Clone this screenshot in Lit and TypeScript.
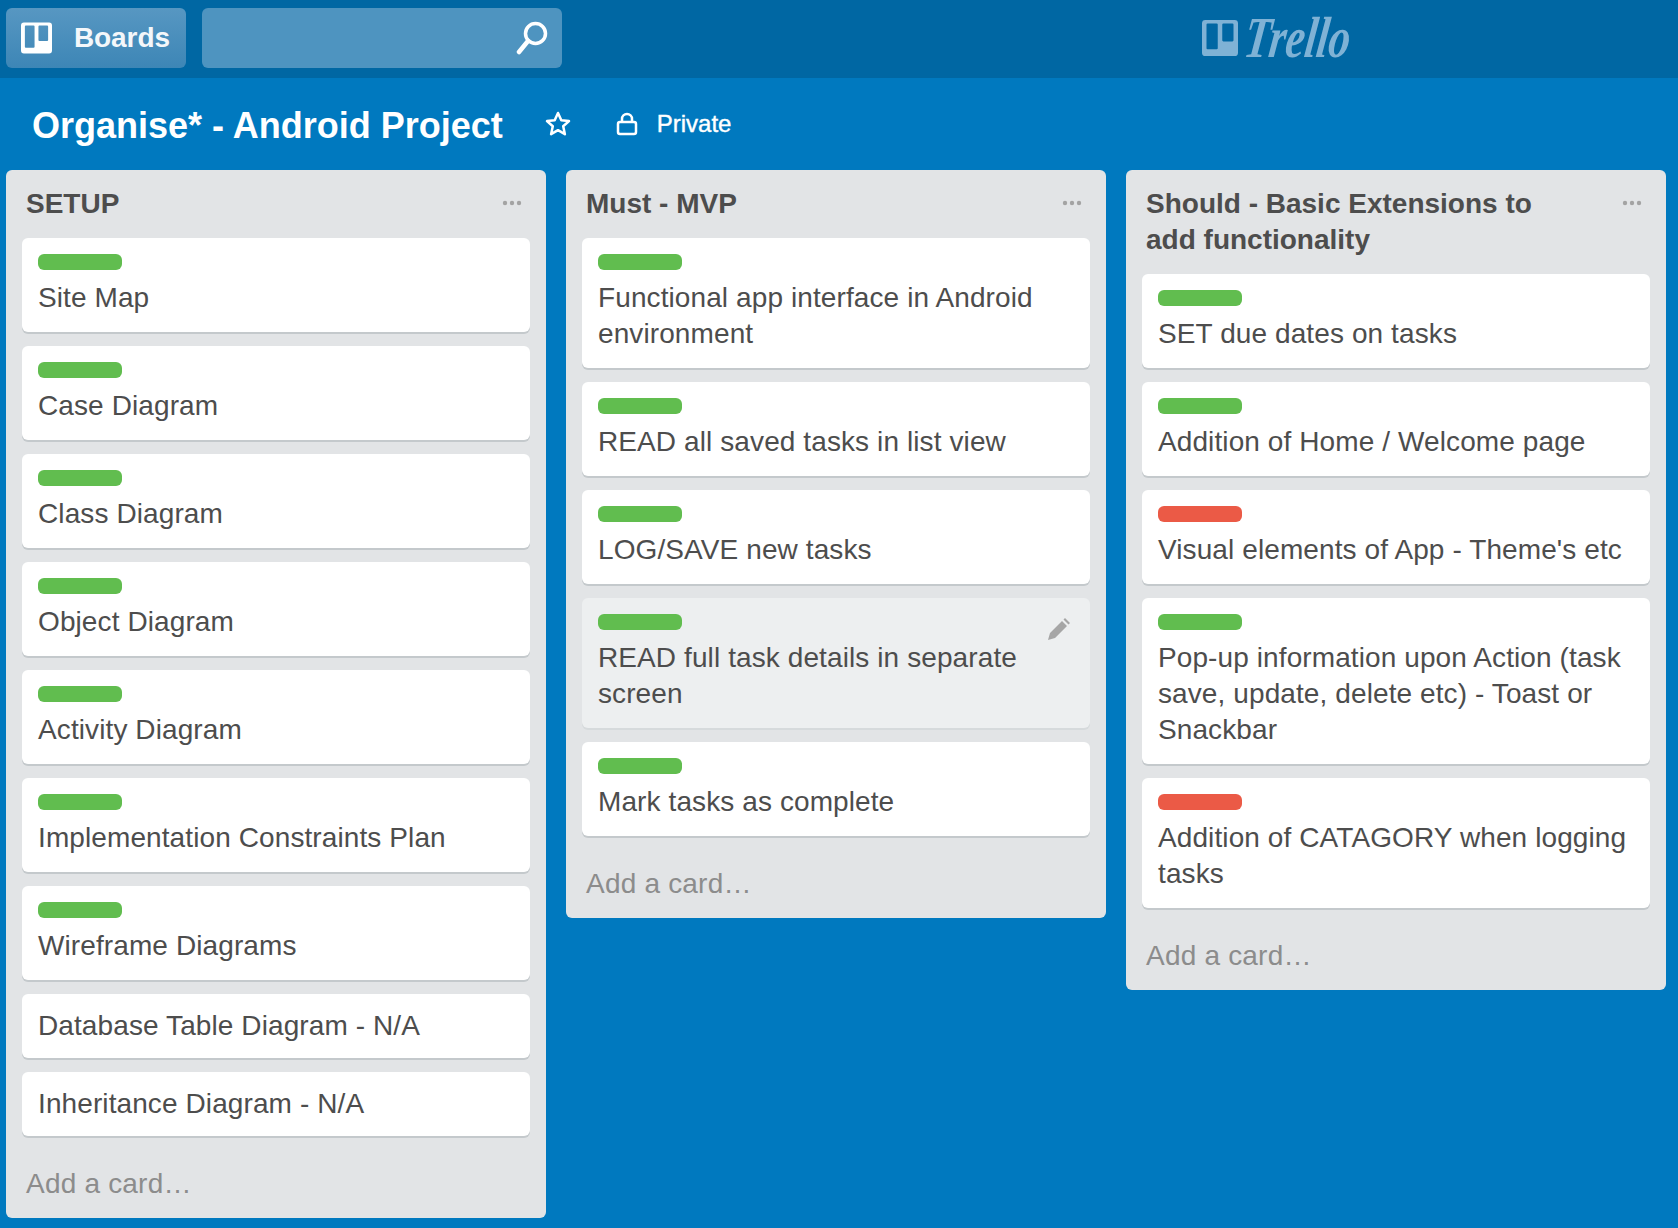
// Tablero estilo Trello: cabecera, barra del tablero y tres listas de tarjetas.
import { LitElement, html, css, svg } from "lit";
import { customElement } from "lit/decorators.js";
import { classMap } from "lit/directives/class-map.js";

type Label = "green" | "red";
interface Card {
  text: string;
  label?: Label;
  hover?: boolean;
}
interface List {
  title: string;
  cards: Card[];
}

const LISTS: List[] = [
  {
    title: "SETUP",
    cards: [
      { text: "Site Map", label: "green" },
      { text: "Case Diagram", label: "green" },
      { text: "Class Diagram", label: "green" },
      { text: "Object Diagram", label: "green" },
      { text: "Activity Diagram", label: "green" },
      { text: "Implementation Constraints Plan", label: "green" },
      { text: "Wireframe Diagrams", label: "green" },
      { text: "Database Table Diagram - N/A" },
      { text: "Inheritance Diagram - N/A" },
    ],
  },
  {
    title: "Must - MVP",
    cards: [
      { text: "Functional app interface in Android environment", label: "green" },
      { text: "READ all saved tasks in list view", label: "green" },
      { text: "LOG/SAVE new tasks", label: "green" },
      { text: "READ full task details in separate screen", label: "green", hover: true },
      { text: "Mark tasks as complete", label: "green" },
    ],
  },
  {
    title: "Should - Basic Extensions to add functionality",
    cards: [
      { text: "SET due dates on tasks", label: "green" },
      { text: "Addition of Home / Welcome page", label: "green" },
      { text: "Visual elements of App - Theme's etc", label: "red" },
      { text: "Pop-up information upon Action (task save, update, delete etc) - Toast or Snackbar", label: "green" },
      { text: "Addition of CATAGORY when logging tasks", label: "red" },
    ],
  },
];

const boardIcon = svg`<path fill-rule="evenodd" d="M3 0h26a3 3 0 0 1 3 3v26a3 3 0 0 1-3 3H3a3 3 0 0 1-3-3V3a3 3 0 0 1 3-3zm1 4v21a1 1 0 0 0 1 1h8a1 1 0 0 0 1-1V4a1 1 0 0 0-1-1H5a1 1 0 0 0-1 1zm14 0v14a1 1 0 0 0 1 1h8a1 1 0 0 0 1-1V4a1 1 0 0 0-1-1h-8a1 1 0 0 0-1 1z"/>`;

@customElement("app-root")
export class AppRoot extends LitElement {
  static styles = css`
    :host {
      display: block;
      height: 1228px;
      overflow: hidden;
      background: #0079bf;
      font-family: "Liberation Sans", Arial, sans-serif;
      color: #4d4d4d;
    }

    /* Cabecera */
    .top {
      height: 78px;
      box-sizing: border-box;
      padding: 8px 6px 10px;
      background: #0067a3;
      display: flex;
      gap: 16px;
      position: relative;
    }
    .boards {
      width: 180px;
      display: flex;
      align-items: center;
      gap: 22px;
      padding-left: 15px;
      box-sizing: border-box;
      border-radius: 6px;
      background: linear-gradient(#5797c2, #3d86b6);
      color: #f4f7fa;
      font-size: 28px;
      font-weight: 700;
      letter-spacing: -0.1px;
    }
    .boards svg {
      width: 31px;
      height: 32px;
      fill: #fff;
    }
    .search {
      width: 360px;
      display: flex;
      align-items: center;
      justify-content: flex-end;
      padding-right: 14px;
      box-sizing: border-box;
      border-radius: 6px;
      background: #4e94c0;
    }
    .search svg {
      width: 32px;
      height: 34px;
    }
    .logo {
      position: absolute;
      left: 1202px;
      top: 20px;
      display: flex;
      align-items: center;
      gap: 7px;
      color: #7fb2d5;
    }
    .logo svg {
      width: 36px;
      height: 36px;
      fill: #7fb2d5;
    }
    .logo span {
      width: 104px;
      font-family: "Liberation Serif", serif;
      font-style: italic;
      font-weight: 700;
      font-size: 58px;
      line-height: 36px;
      transform: scaleX(0.74) skewX(-10deg);
      transform-origin: left center;
    }

    /* Barra del tablero */
    .bar {
      height: 92px;
      box-sizing: border-box;
      padding: 0 32px;
      display: flex;
      align-items: center;
      color: #fff;
    }
    .bar h1 {
      margin: 4px 0 0;
      font-size: 36px;
      font-weight: 700;
    }
    .star {
      width: 26px;
      height: 26px;
      margin-left: 42px;
    }
    .lock {
      width: 22px;
      height: 24px;
      margin-left: 45px;
    }
    .private {
      margin-left: 19px;
      font-size: 24px;
      -webkit-text-stroke: 0.4px #fff;
    }

    /* Listas */
    .lists {
      display: flex;
      align-items: flex-start;
      gap: 20px;
      padding: 0 6px;
    }
    .list {
      width: 540px;
      box-sizing: border-box;
      background: #e2e4e6;
      border-radius: 6px;
      padding: 0 16px 16px;
    }
    .list-head {
      display: flex;
      justify-content: space-between;
      padding: 16px 8px 16px 4px;
    }
    .list-head h2 {
      margin: 0;
      max-width: 420px;
      font-size: 28px;
      line-height: 36px;
      font-weight: 700;
    }
    .dots {
      width: 20px;
      height: 6px;
      margin: 14px 0 0;
      fill: #a3a3a3;
      flex: none;
    }
    .cards {
      display: flex;
      flex-direction: column;
      gap: 14px;
    }
    .card {
      position: relative;
      background: #fff;
      border-radius: 6px;
      box-shadow: 0 2px 0 #c4c9cc;
      padding: 14px 16px;
      font-size: 28px;
      line-height: 36px;
      letter-spacing: 0.1px;
    }
    .card.labeled {
      padding-top: 16px;
      padding-bottom: 16px;
    }
    .card.hover {
      background: #edeff0;
      box-shadow: 0 2px 0 #d6dadc;
    }
    .label {
      width: 84px;
      height: 16px;
      border-radius: 6px;
      margin-bottom: 10px;
    }
    .label.green {
      background: #61bd4f;
    }
    .label.red {
      background: #eb5a46;
    }
    .pencil {
      position: absolute;
      top: 20px;
      right: 20px;
      width: 22px;
      height: 22px;
      fill: #a6a6a6;
    }
    .add {
      padding: 30px 4px 0;
      font-size: 28px;
      line-height: 36px;
      letter-spacing: 0.2px;
      color: #8c8c8c;
    }
  `;

  private renderCard(card: Card) {
    return html`
      <div class=${classMap({ card: true, labeled: !!card.label, hover: !!card.hover })}>
        ${card.label ? html`<div class="label ${card.label}"></div>` : ""}
        ${card.text}
        ${card.hover
          ? html`<svg class="pencil" viewBox="0 0 22 22">
              <path d="M0 22l2-7L14 3l5 5L7 20zM15.5 1.5L17 0l5 5-1.500 1.500z" />
            </svg>`
          : ""}
      </div>
    `;
  }

  private renderList(list: List) {
    return html`
      <section class="list">
        <header class="list-head">
          <h2>${list.title}</h2>
          <svg class="dots" viewBox="0 0 20 6">
            <circle cx="3" cy="3" r="2.200" />
            <circle cx="10" cy="3" r="2.200" />
            <circle cx="17" cy="3" r="2.200" />
          </svg>
        </header>
        <div class="cards">${list.cards.map((c) => this.renderCard(c))}</div>
        <div class="add">Add a card…</div>
      </section>
    `;
  }

  render() {
    return html`
      <div class="top">
        <div class="boards">
          <svg viewBox="0 0 32 32">${boardIcon}</svg>
          Boards
        </div>
        <div class="search">
          <svg viewBox="0 0 32 34" fill="none" stroke="#fff" stroke-linecap="round">
            <circle cx="19.500" cy="12.500" r="10" stroke-width="3.500" />
            <path d="M12 20L3 31" stroke-width="4.500" />
          </svg>
        </div>
        <div class="logo">
          <svg viewBox="0 0 32 32">${boardIcon}</svg>
          <span>Trello</span>
        </div>
      </div>
      <div class="bar">
        <h1>Organise* - Android Project</h1>
        <svg class="star" viewBox="0 0 26 26" fill="none" stroke="#fff" stroke-width="2.500" stroke-linejoin="round">
          <path d="M13 2l3.300 7.300 7.700.8-5.800 5.200 1.700 7.900-6.900-4-6.900 4 1.700-7.900L2 10.100l7.700-.8z" />
        </svg>
        <svg class="lock" viewBox="0 0 22 24" fill="none" stroke="#fff" stroke-width="2.500">
          <rect x="2" y="10" width="18" height="12" rx="2" />
          <path d="M6 10V7a5 5 0 0 1 10 0v3" />
        </svg>
        <span class="private">Private</span>
      </div>
      <div class="lists">${LISTS.map((l) => this.renderList(l))}</div>
    `;
  }
}
